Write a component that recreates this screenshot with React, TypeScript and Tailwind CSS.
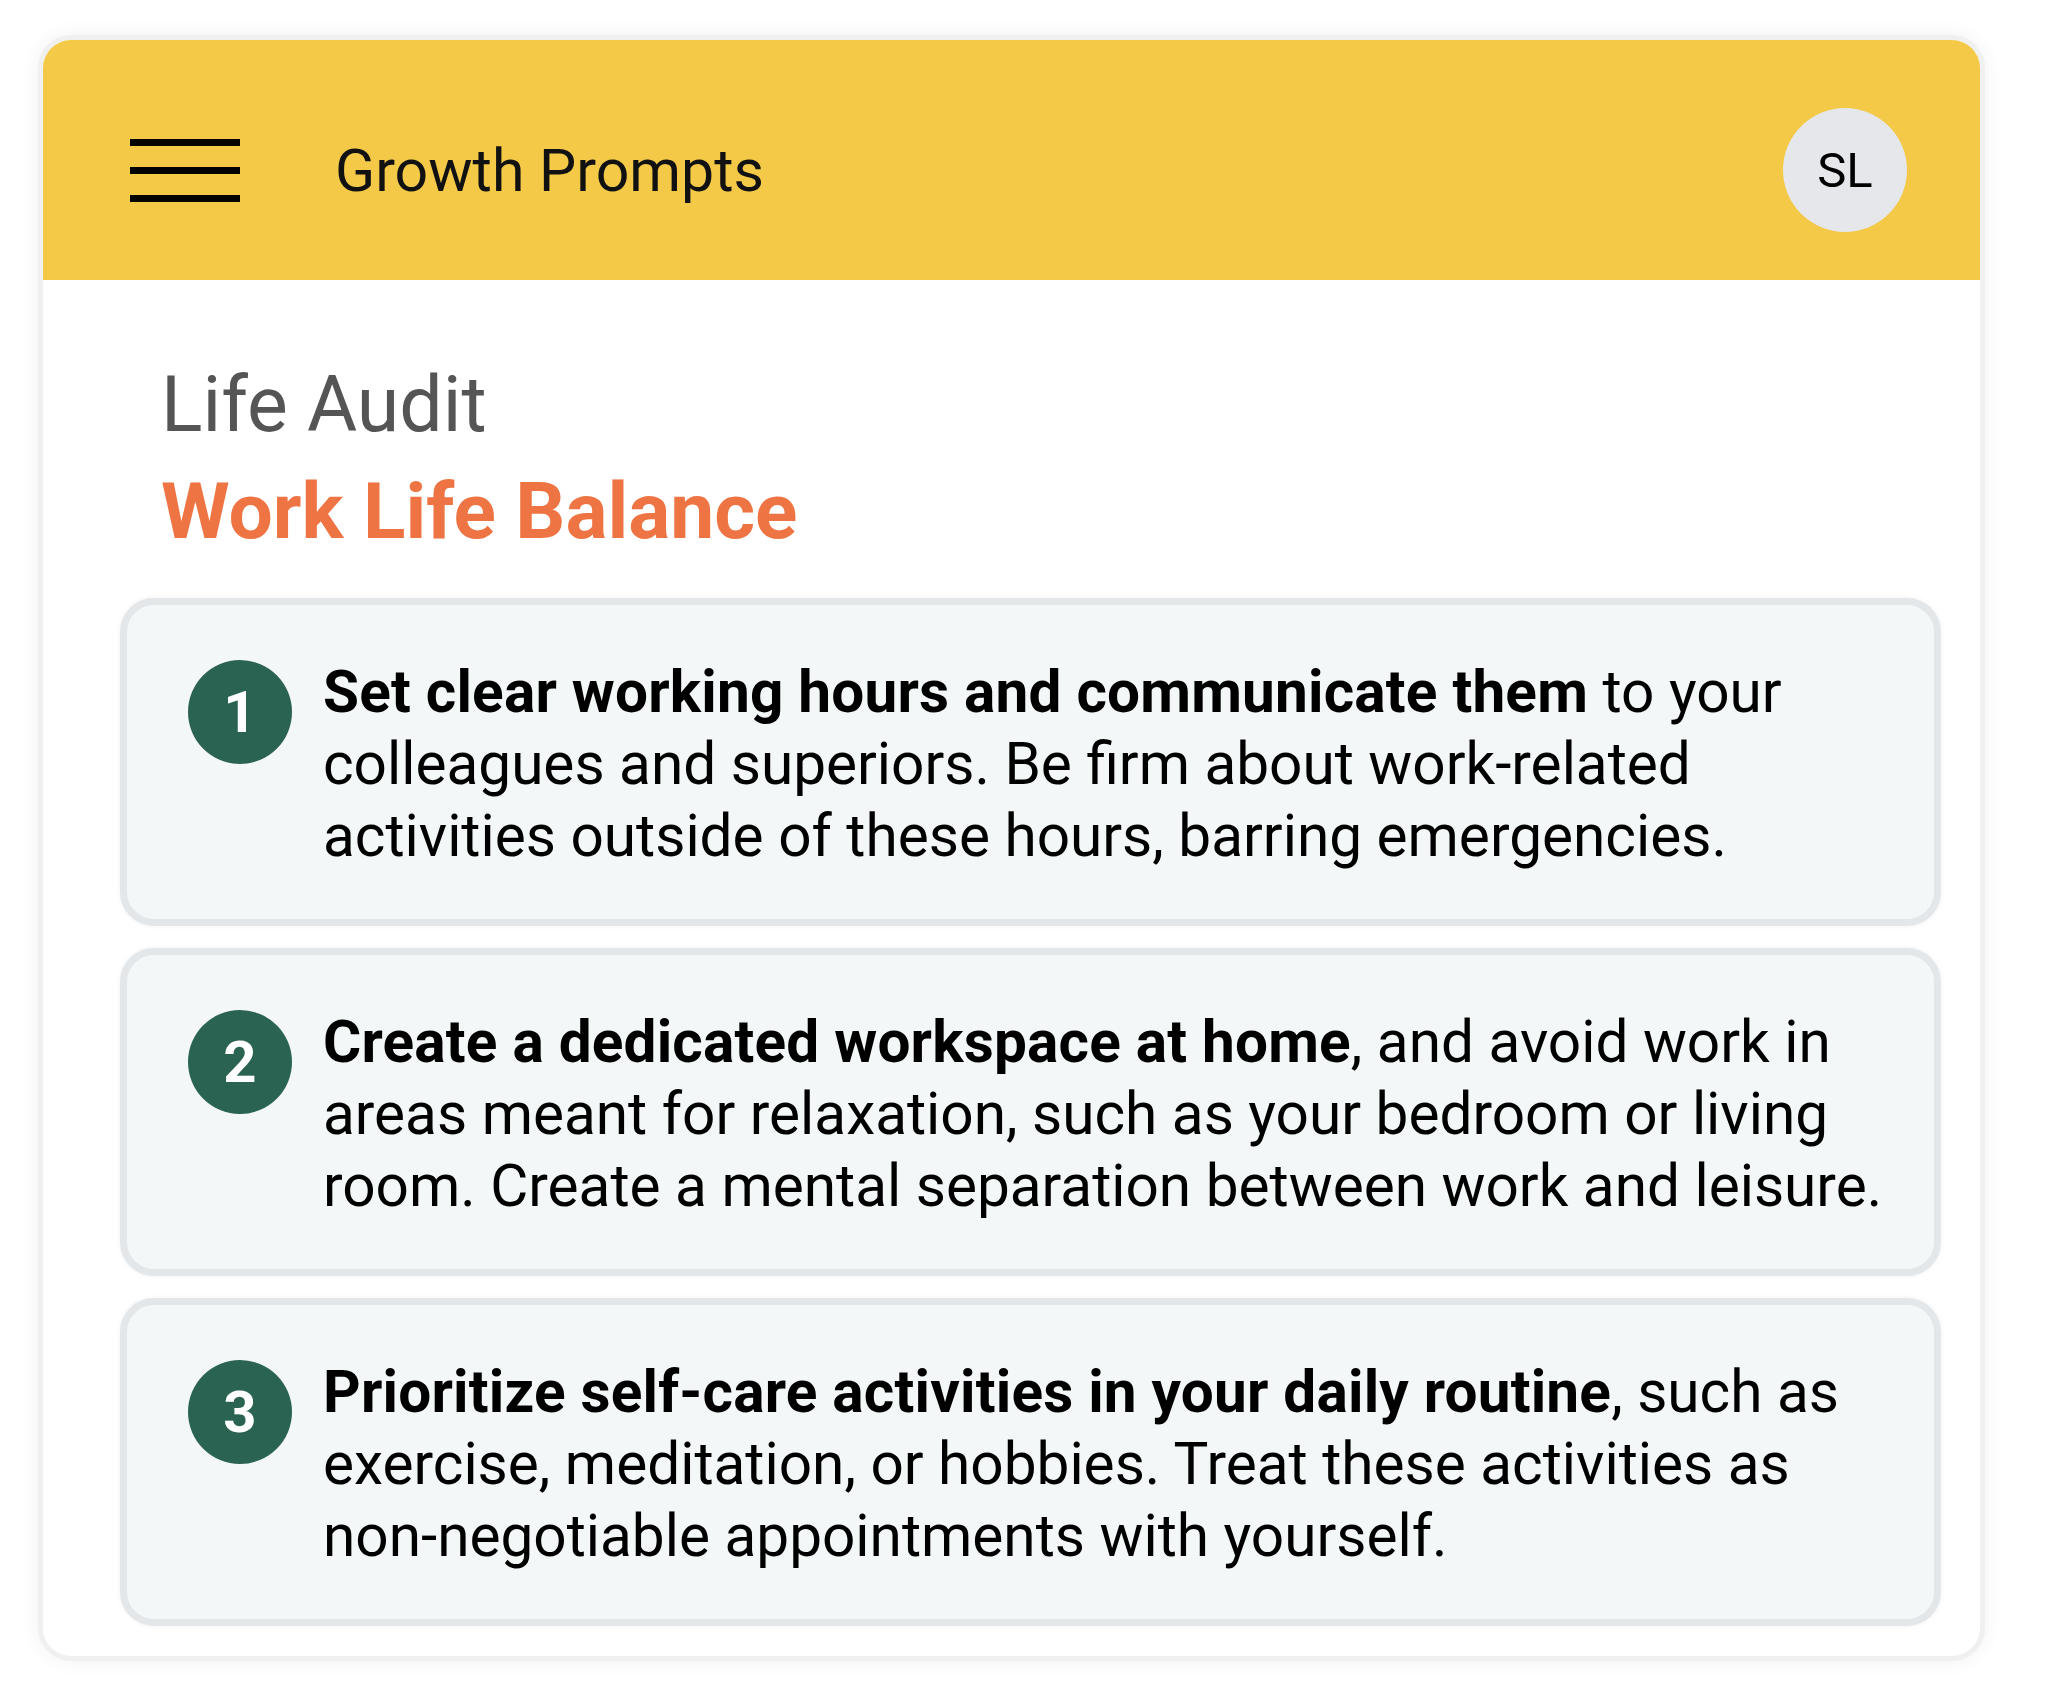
import React from 'react';

type Prompt = {
  id: number;
  bold: string;
  lines: string[];
};

const PROMPTS: Prompt[] = [
  {
    id: 1,
    bold: 'Set clear working hours and communicate them',
    lines: [
      ' to your',
      'colleagues and superiors. Be firm about work-related',
      'activities outside of these hours, barring emergencies.',
    ],
  },
  {
    id: 2,
    bold: 'Create a dedicated workspace at home',
    lines: [
      ', and avoid work in',
      'areas meant for relaxation, such as your bedroom or living',
      'room. Create a mental separation between work and leisure.',
    ],
  },
  {
    id: 3,
    bold: 'Prioritize self-care activities in your daily routine',
    lines: [
      ', such as',
      'exercise, meditation, or hobbies. Treat these activities as',
      'non-negotiable appointments with yourself.',
    ],
  },
];

function PromptCard({ prompt }: { prompt: Prompt }) {
  const [first, ...rest] = prompt.lines;
  return (
    <div className="flex gap-[31px] rounded-[34px] border-[7px] border-[#e4e7ea] bg-[#f4f7f8] pl-[61px] pr-[30px] pt-[51px] pb-[47px] shadow-[0_0_5px_rgba(0,0,0,0.06)]">
      <div className="mt-[4px] flex size-[104px] shrink-0 items-center justify-center rounded-full bg-[#2b6352] text-[58px] font-bold leading-none text-white">
        {prompt.id}
      </div>
      <p className="whitespace-nowrap text-[58.5px] leading-[72px] text-black">
        <span className="font-bold tracking-[0.2px]">{prompt.bold}</span>
        {first}
        {rest.map((line, i) => (
          <React.Fragment key={i}>
            <br />
            {line}
          </React.Fragment>
        ))}
      </p>
    </div>
  );
}

export default function App() {
  return (
    <div className="min-h-screen bg-white pt-[40px] pl-[43px] font-[Roboto,'Liberation_Sans',sans-serif]">
      <div className="w-[1937px] overflow-hidden rounded-[28px] bg-white pb-[30px] shadow-[0_0_0_5px_#f0f0f0,0_0_24px_rgba(0,0,0,0.09)]">
        {/* Header */}
        <header className="flex h-[240px] items-center bg-[#f3c947] pt-[20px] pl-[87px] pr-[73px]">
          <button className="flex w-[110px] flex-col gap-[21px]">
            <span className="block h-[7px] w-full bg-black" />
            <span className="block h-[7px] w-full bg-black" />
            <span className="block h-[7px] w-full bg-black" />
          </button>
          <h1 className="ml-[95px] text-[59px] leading-none text-[#111]">Growth Prompts</h1>
          <div className="ml-auto flex size-[124px] items-center justify-center rounded-full bg-[#e5e7eb] text-[49px] leading-none text-black">
            SL
          </div>
        </header>

        {/* Content */}
        <main className="pl-[77px] pr-[39px] pt-[80px]">
          <div className="pl-[41px]">
            <h2 className="text-[77px] leading-[90px] text-[#555]">Life Audit</h2>
            <h3 className="mt-[16px] text-[78.5px] font-bold leading-[90px] text-[#ee7543]">Work Life Balance</h3>
          </div>

          <div className="mt-[42px] flex flex-col gap-[22px]">
            {PROMPTS.map((p) => (
              <PromptCard key={p.id} prompt={p} />
            ))}
          </div>
        </main>
      </div>
    </div>
  );
}
